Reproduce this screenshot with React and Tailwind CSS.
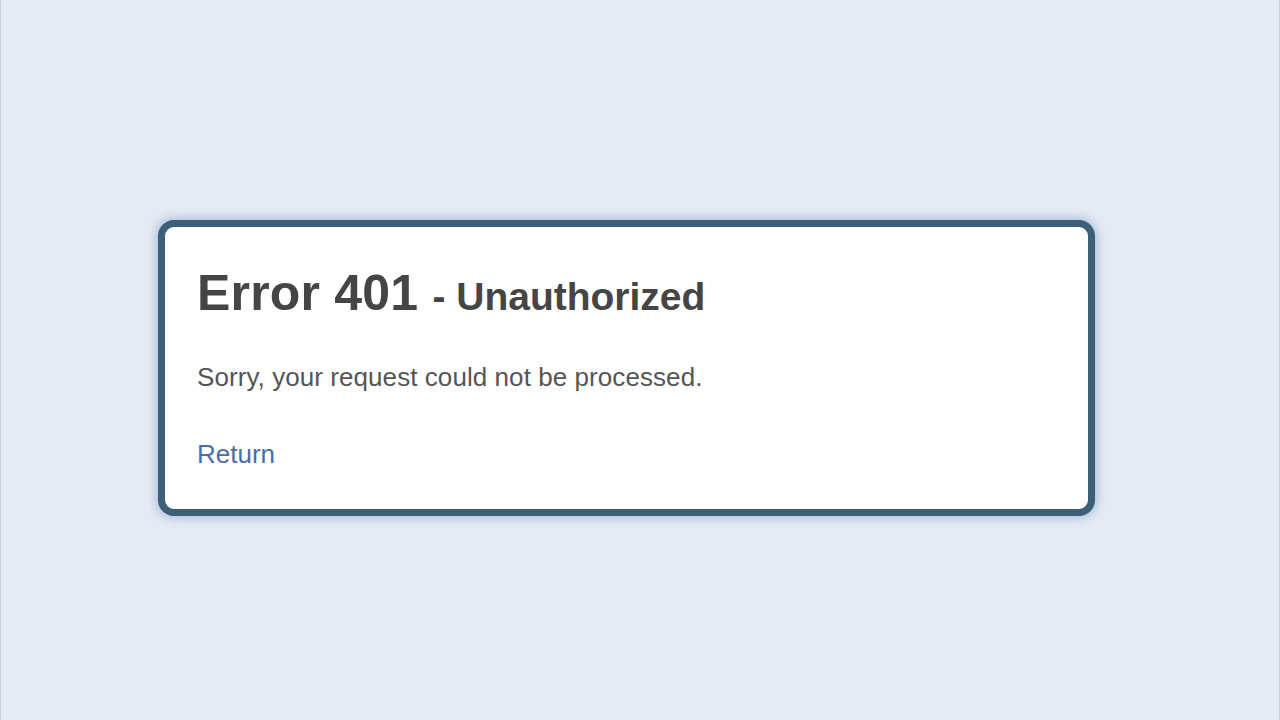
import React from "react";

export default function App() {
    return (
        <div className="w-[1280px] h-[720px] bg-[#e6ebf3] border-x border-[#c9d0da] flex flex-col items-start font-['Liberation_Sans',Arial,sans-serif]">
            <div className="mt-[220px] ml-[157px] w-[937px] h-[296px] rounded-[16px] border-[7px] border-[#3e5f78] bg-white shadow-[0_0_10px_3px_rgba(140,170,210,0.6)] pl-[32px] pt-[41px]">
                <h1 className="text-[#454545] font-bold leading-none flex items-baseline">
                    <span className="text-[50px] tracking-[0.2px]">Error 401</span>
                    <span className="text-[39px] ml-[14px]">- Unauthorized</span>
                </h1>
                <p className="mt-[46px] text-[26px] leading-none text-[#555555] tracking-[0.07px]">
                    Sorry, your request could not be processed.
                </p>
                <a href="#" className="block mt-[51px] text-[26px] leading-none text-[#4a6ea8] w-fit">
                    Return
                </a>
            </div>
        </div>
    );
}
